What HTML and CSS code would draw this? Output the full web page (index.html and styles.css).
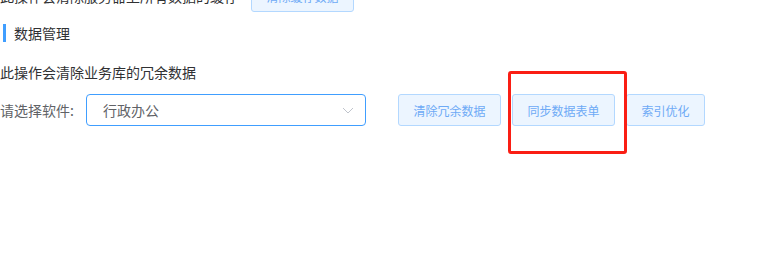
FILE: index.html
```html
<!DOCTYPE html>
<html lang="zh-CN">
<head>
  <meta charset="UTF-8">
  <meta name="viewport" content="width=device-width, initial-scale=1.0">
  <title>数据管理</title>
  <link rel="stylesheet" href="styles.css">
</head>
<body>
  <div class="cache-row">
    <span>此操作会清除服务器上所有数据的缓存</span>
    <button class="btn">清除缓存数据</button>
  </div>

  <div class="section-title">数据管理</div>

  <p class="desc">此操作会清除业务库的冗余数据</p>

  <div class="form-row">
    <label class="label">请选择软件:</label>
    <div class="select">
      <span class="select-value">行政办公</span>
      <svg class="select-arrow" width="12" height="7" viewBox="0 0 12 7">
        <path d="M1 1 L6 6 L11 1" fill="none" stroke="#c0c4cc" stroke-width="1"/>
      </svg>
    </div>
    <div class="actions">
      <button class="btn">清除冗余数据</button>
      <button class="btn">同步数据表单</button>
      <button class="btn">索引优化</button>
    </div>
  </div>

  <div class="highlight"></div>
</body>
</html>
```

FILE: styles.css
```css
body {
  margin: 0;
  padding: 0;
  background: #fff;
  font-family: "Noto Sans CJK SC", "Noto Sans", sans-serif;
  font-size: 14px;
  color: #303133;
  position: relative;
  width: 770px;
  height: 266px;
  overflow: hidden;
}

.cache-row {
  display: flex;
  align-items: center;
  height: 32px;
  margin-top: -20px;
}

.cache-row .btn {
  margin-left: 13px;
}

.section-title {
  margin: 12px 0 0 3px;
  padding-left: 8px;
  border-left: 3px solid #409eff;
  height: 18px;
  line-height: 18px;
  font-size: 14px;
}

.desc {
  margin: 23px 0 0;
  line-height: 14px;
  font-size: 14px;
}

.form-row {
  display: flex;
  align-items: center;
  margin-top: 15px;
}

.label {
  width: 86px;
  color: #606266;
  font-size: 14px;
}

.select {
  width: 280px;
  height: 32px;
  box-sizing: border-box;
  border: 1px solid #409eff;
  border-radius: 4px;
  display: flex;
  align-items: center;
  justify-content: space-between;
  padding: 0 11px 0 16px;
}

.select-value {
  color: #606266;
  font-size: 14px;
}

.actions {
  display: flex;
  gap: 11px;
  margin-left: 32px;
}

.btn {
  height: 32px;
  box-sizing: border-box;
  padding: 0 14.5px;
  font-family: inherit;
  font-size: 12px;
  color: #6eaaf6;
  background: #ecf5ff;
  border: 1px solid #b3d8ff;
  border-radius: 3px;
}

.highlight {
  position: absolute;
  left: 508px;
  top: 71px;
  width: 119px;
  height: 83px;
  box-sizing: border-box;
  border: 3px solid #fa1e14;
  border-radius: 3px;
}
```
